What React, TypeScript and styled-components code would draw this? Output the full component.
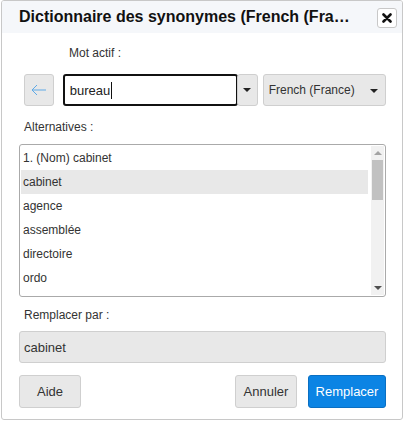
import styled, { createGlobalStyle } from "styled-components";

const Global = createGlobalStyle`
  html, body {
    margin: 0;
    padding: 0;
    background: #fff;
  }
  body {
    font-family: "Liberation Sans", Arial, sans-serif;
    color: #333;
  }
`;

const Dialog = styled.div`
  box-sizing: border-box;
  width: 402px;
  height: 420px;
  margin-left: 1px;
  border: 1px solid #c8c8c8;
  border-radius: 3px;
  background: #fff;
  display: flex;
  flex-direction: column;
  overflow: hidden;
`;

const TitleBar = styled.div`
  height: 32px;
  background: #f5f7fa;
  display: flex;
  align-items: center;
  padding: 0 5px 0 17px;
  gap: 12px;
`;

const Title = styled.div`
  flex: 1;
  min-width: 0;
  font-size: 16px;
  font-weight: bold;
  color: #111;
  white-space: nowrap;
  overflow: hidden;
  text-overflow: ellipsis;
  padding-right: 14px;
`;

const CloseButton = styled.button`
  box-sizing: border-box;
  width: 20px;
  height: 20px;
  padding: 0;
  border: 1px solid #c8c8c8;
  border-radius: 3px;
  background: #fff;
  display: flex;
  align-items: center;
  justify-content: center;
  margin-top: 2px;
`;

const Body = styled.div`
  display: flex;
  flex-direction: column;
  padding: 0 16px 0 17px;
`;

const Label = styled.div<{ $indent?: number; $top: number }>`
  font-size: 12px;
  line-height: 14px;
  color: #333;
  margin-top: ${(p) => p.$top}px;
  padding-left: ${(p) => p.$indent ?? 5}px;
`;

const WordRow = styled.div`
  display: flex;
  align-items: stretch;
  height: 32px;
  margin-top: 14px;
  padding-left: 5px;
`;

const BackButton = styled.button`
  box-sizing: border-box;
  width: 30px;
  padding: 0;
  border: 1px solid #cfcfcf;
  border-radius: 3px;
  background: #e8e8e8;
  display: flex;
  align-items: center;
  justify-content: center;
  margin-right: 9px;
`;

const WordInput = styled.div`
  box-sizing: border-box;
  width: 176px;
  border: 2px solid #111;
  border-radius: 3px;
  display: flex;
  align-items: center;
  padding-left: 5px;
  font-size: 13px;
  color: #222;
`;

const Caret = styled.span`
  display: inline-block;
  width: 1px;
  height: 17px;
  background: #111;
  margin-left: 1px;
`;

const Toggle = styled.button<{ $width: number }>`
  box-sizing: border-box;
  width: ${(p) => p.$width}px;
  border: 1px solid #cfcfcf;
  border-radius: 3px;
  background: #e8e8e8;
  display: flex;
  align-items: center;
  justify-content: space-between;
  padding: 0 6px;
  font-family: "Liberation Sans", Arial, sans-serif;
  font-size: 12px;
  color: #333;
`;

const DropToggle = styled(Toggle)`
  margin-left: -1px;
  justify-content: center;
  padding: 0;
`;

const LangSelect = styled(Toggle)`
  margin-left: 5px;
  padding: 8px 7px 0 5px;
  align-items: flex-start;
`;

const Arrow = styled.span`
  width: 0;
  height: 0;
  border-left: 4px solid transparent;
  border-right: 4px solid transparent;
  border-top: 4px solid #222;
`;

const LangArrow = styled(Arrow)`
  margin-top: 6px;
`;

const ListBox = styled.div`
  box-sizing: border-box;
  height: 153px;
  margin-top: 10px;
  border: 1px solid #aaa;
  border-radius: 3px;
  display: flex;
  overflow: hidden;
`;

const Items = styled.div`
  flex: 1;
  padding: 1px 3px 0 1px;
  overflow: hidden;
`;

const Item = styled.div<{ $selected?: boolean }>`
  height: 24px;
  line-height: 24px;
  padding-left: 2px;
  font-size: 12px;
  color: #333;
  background: ${(p) => (p.$selected ? "#e8e8e8" : "transparent")};
`;

const ScrollBar = styled.div`
  width: 13px;
  margin: 1px 1px 1px 0;
  background: #f1f1f1;
  display: flex;
  flex-direction: column;
  align-items: center;
`;

const ScrollArrow = styled.span<{ $up?: boolean }>`
  width: 0;
  height: 0;
  margin: 5px 0;
  border-left: 4px solid transparent;
  border-right: 4px solid transparent;
  ${(p) =>
    p.$up ? "border-bottom: 4px solid #a3a3a3;" : "border-top: 4px solid #505050;"}
`;

const Thumb = styled.div`
  width: 11px;
  height: 40px;
  background: #c1c1c1;
`;

const Spacer = styled.div`
  flex: 1;
`;

const ReplaceField = styled.div`
  box-sizing: border-box;
  height: 32px;
  margin-top: 9px;
  border: 1px solid #cfcfcf;
  border-radius: 3px;
  background: #e8e8e8;
  display: flex;
  align-items: center;
  padding-left: 4px;
  font-size: 13px;
  color: #333;
`;

const Footer = styled.div`
  display: flex;
  gap: 11px;
  margin-top: 12px;
`;

const Button = styled.button<{ $primary?: boolean; $width: number }>`
  box-sizing: border-box;
  height: 33px;
  width: ${(p) => p.$width}px;
  border-radius: 3px;
  border: 1px solid ${(p) => (p.$primary ? "#0a6fc2" : "#cfcfcf")};
  background: ${(p) => (p.$primary ? "#0b84e4" : "#e8e8e8")};
  color: ${(p) => (p.$primary ? "#fff" : "#333")};
  font-family: "Liberation Sans", Arial, sans-serif;
  font-size: 13px;
  padding: 0;
`;

const items = ["1. (Nom) cabinet", "cabinet", "agence", "assemblée", "directoire", "ordo"];

export default function App() {
  return (
    <>
      <Global />
      <Dialog>
        <TitleBar>
          <Title>Dictionnaire des synonymes (French (France))</Title>
          <CloseButton>
            <svg width="10" height="10" viewBox="0 0 10 10">
              <path d="M1.5 1.5 L8.5 8.5 M8.5 1.5 L1.5 8.5" stroke="#111" strokeWidth="2.6" strokeLinecap="round" />
            </svg>
          </CloseButton>
        </TitleBar>
        <Body>
          <Label $indent={50} $top={13}>Mot actif :</Label>
          <WordRow>
            <BackButton>
              <svg width="16" height="12" viewBox="0 0 16 12">
                <path d="M1 6 H15 M1 6 L6 1 M1 6 L6 11" stroke="#5ea9e6" strokeWidth="1" fill="none" />
              </svg>
            </BackButton>
            <WordInput>
              bureau
              <Caret />
            </WordInput>
            <DropToggle $width={21}>
              <Arrow />
            </DropToggle>
            <LangSelect $width={124}>
              French (France)
              <LangArrow />
            </LangSelect>
          </WordRow>
          <Label $top={14}>Alternatives :</Label>
          <ListBox>
            <Items>
              {items.map((w, i) => (
                <Item key={w} $selected={i === 1}>
                  {w}
                </Item>
              ))}
            </Items>
            <ScrollBar>
              <ScrollArrow $up />
              <Thumb />
              <Spacer />
              <ScrollArrow />
            </ScrollBar>
          </ListBox>
          <Label $top={11}>Remplacer par :</Label>
          <ReplaceField>cabinet</ReplaceField>
          <Footer>
            <Button $width={62}>Aide</Button>
            <Spacer />
            <Button $width={62}>Annuler</Button>
            <Button $width={78} $primary>
              Remplacer
            </Button>
          </Footer>
        </Body>
      </Dialog>
    </>
  );
}
